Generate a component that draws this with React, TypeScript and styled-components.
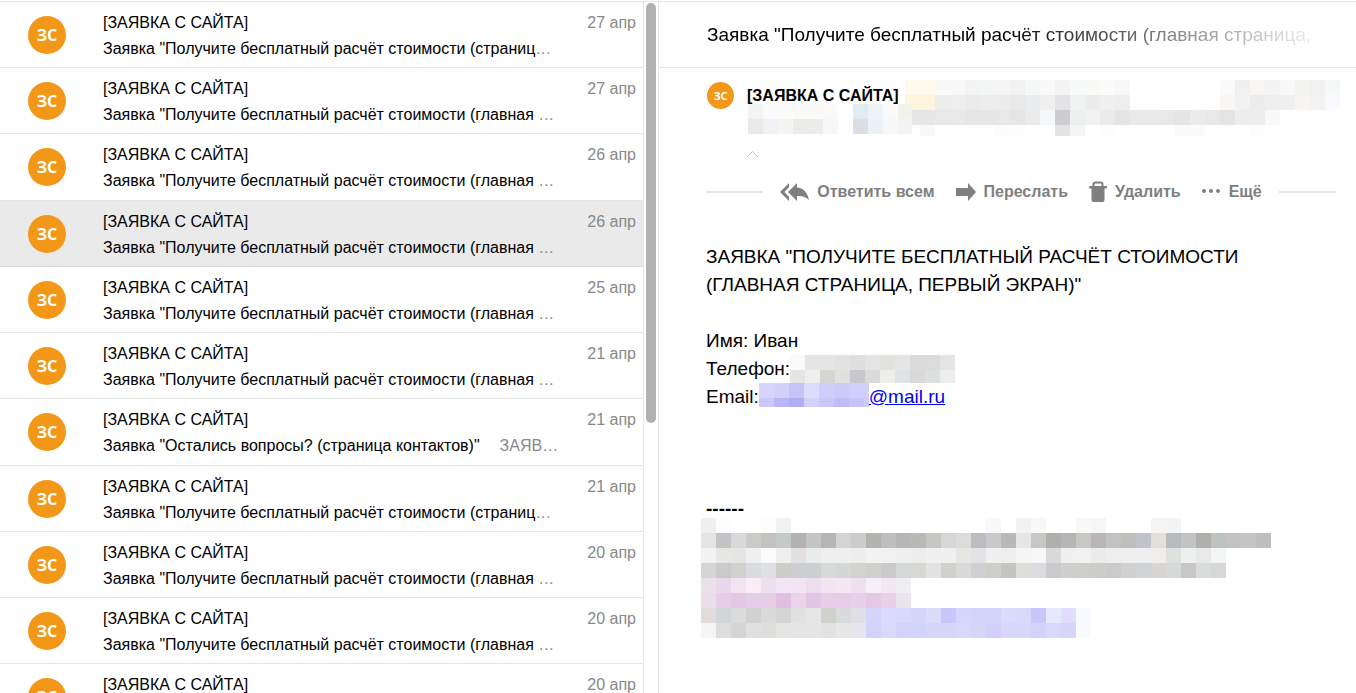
import React from "react";
import styled, { createGlobalStyle } from "styled-components";

const GlobalStyle = createGlobalStyle`
  * { box-sizing: border-box; }
  body {
    margin: 0;
    background: #fff;
    color: #000;
    font-family: "Liberation Sans", Arial, sans-serif;
    font-size: 16px;
  }
  button { font: inherit; color: inherit; background: none; border: 0; padding: 0; cursor: pointer; }
`;

const Shell = styled.div`
  display: grid;
  grid-template-columns: minmax(0, 659fr) minmax(0, 697fr);
  height: 100vh;
  overflow: hidden;
  padding-top: 1px;
  background: #fff;
`;

const ListPane = styled.section`
  display: flex;
  min-height: 0;
  overflow: hidden;
  border-top: 1px solid #e5e5e5;
  border-right: 1px solid #e5e5e5;
`;

const Letters = styled.ul`
  flex: 1;
  min-width: 0;
  margin: 0;
  padding: 0;
  list-style: none;
  border-right: 1px solid #e5e5e5;
`;

const Letter = styled.li<{ $selected?: boolean }>`
  display: flex;
  height: 66px;
  padding: 8px 7px 0 28px;
  border-bottom: 1px solid ${(p) => (p.$selected ? "#d8d8d8" : "#e5e5e5")};
  background: ${(p) => (p.$selected ? "#eaeaea" : "#fff")};
  &:nth-child(4n + 3) { height: 67px; }
`;

const Avatar = styled.span<{ $small?: boolean }>`
  flex: none;
  display: grid;
  place-items: center;
  width: ${(p) => (p.$small ? 27 : 38)}px;
  height: ${(p) => (p.$small ? 27 : 38)}px;
  margin-top: ${(p) => (p.$small ? 0 : 6)}px;
  border-radius: 50%;
  background: #f39719;
  color: #fff;
  font: 700 ${(p) => (p.$small ? 11 : 16)}px "Open Sans", sans-serif;
`;

const Summary = styled.div`
  flex: 1;
  min-width: 0;
  margin-left: 37px;
  line-height: 26px;
`;

const SummaryTop = styled.div`
  display: flex;
  justify-content: space-between;
`;

const DateLabel = styled.time`
  color: #888;
`;

const SubjectLine = styled.div`
  margin-right: 76px;
  overflow: hidden;
  white-space: nowrap;
  text-overflow: ellipsis;
  color: #888;
`;

const Subject = styled.span`
  color: #000;
`;

const Excerpt = styled.span`
  margin-left: 20px;
`;

const ScrollTrack = styled.div`
  flex: none;
  width: 14px;
  padding: 1px 2px;
`;

const ScrollThumb = styled.div`
  height: 61%;
  border-radius: 5px;
  background: #b1b1b1;
`;

const Reader = styled.main`
  min-width: 0;
  border-top: 1px solid #e5e5e5;
`;

const ReaderTitle = styled.h1`
  margin: 0;
  height: 66px;
  padding: 0 20px 0 48px;
  border-bottom: 1px solid #e5e5e5;
  font-size: 19px;
  font-weight: 400;
  line-height: 66px;
`;

const FadingText = styled.span`
  display: block;
  overflow: hidden;
  white-space: nowrap;
  mask-image: linear-gradient(to right, #000 46%, transparent 100%);
`;

const Sender = styled.header`
  position: relative;
  display: flex;
  gap: 13px;
  height: 66px;
  padding: 14px 16px 0 48px;
`;

const SenderName = styled.strong`
  line-height: 28px;
`;

const SenderMosaic = styled.div`
  position: absolute;
  top: 12px;
  left: 89px;
`;

const Collapse = styled.button`
  display: block;
  margin: 12px 0 0 87px;
  height: 12px;
`;

const Toolbar = styled.div`
  display: flex;
  align-items: center;
  height: 48px;
  margin-top: 10px;
  padding: 0 20px 0 47px;
  color: #7f7f7f;
  font-weight: 700;
  &::before, &::after {
    content: "";
    flex: 1;
    height: 2px;
    background: #e5e5e5;
  }
  &::before { margin-right: 17px; }
  &::after { margin-left: 17px; }
`;

const Actions = styled.div`
  display: flex;
  gap: 21px;
`;

const Action = styled.button`
  display: flex;
  align-items: center;
  gap: 8px;
  line-height: 24px;
  white-space: nowrap;
`;

const Body = styled.article`
  padding: 27px 20px 0 47px;
  font-size: 19px;
  line-height: 28px;
  p { margin: 0 0 28px; max-width: 560px; }
`;

const Fields = styled.div`
  margin-bottom: 84px;
`;

const Field = styled.div`
  display: flex;
  height: 28px;
  a { color: #0000ee; }
`;

const Signature = styled.footer`
  font-weight: 700;
  svg { display: block; margin: -5px 0 0 -5px; }
`;

const CELL = 15;

type MosaicProps = { rows: string[]; width: number; height: number };

/* Pixelated cover over private data: each row is a list of cell colours, "-" leaves a gap. */
function Mosaic({ rows, width, height }: MosaicProps) {
  return (
    <svg width={width} height={height} shapeRendering="crispEdges" aria-hidden="true">
      {rows.map((row, y) =>
        row.split(" ").map((c, x) =>
          c === "-" ? null : (
            <rect key={`${x}-${y}`} x={x * CELL} y={y * CELL} width={CELL} height={CELL} fill={`#${c}`} />
          )
        )
      )}
    </svg>
  );
}

const nameRight = [
  "fffaec fffaec f9faf8 f8f8f8 f4f4f5 f4f5f5 f5f5f5 f2f2f3 f6f8f8 f9f9f9 f4f4f4 f7faf8 f9f9f6 fbfbfb f8f8f8 - - - - - - fbfbfb f0f0f0 f7f6f3 f4f4f4 f8f8f8 f3f3f2 f1f1f1 f6f8f7",
  "fff5dc fff5dc ededee f0eeed ebebeb ededed ececec e9e9e9 ebecef efefef e3e3e5 eff2f1 ececec eff1f0 f0eeec - - - - - - f9f6f4 f2f2f2 ececec eeeeee f0f0f0 f6f5f3 f3f3f3 f8fafd",
];
const nameLow = [
  "e6e6e6 e6e6e7 e8e8e7 e9e9e9 e6e6e6 e7e7e7 e8e8e8 e6e6e6 ebebeb f6f7fa cdccd1 ecefee f1f1f1 ebebeb e5e5e5 e9e9e9 e9e9e9 e8e8e8 e5e5e5 ebebeb e8e8e8 e4e4e4 ededed ededed f9f9f9",
  "- f9f9f9 - - - - fcfcfc fdfdfd - - e4e2e3 f5f5f5 - fdfdfd - - - - fafafa fbfbfb - - - fdfdfd -",
];
const nameLeft = [
  "f3f3f4 fafafb fbfbfb f9f9f8 f9f9f9 fbfaf8 - dfeaf2 eef3f9 fafafb f2f2ed",
  "e9e9e7 f0f1f7 f4f4f3 ebebe8 ebecec f7f7f8 - dbdee4 eaf2f7 f7f7f8 f4f4f4",
];
const phone = [
  "fafafa e5e5e5 e5e5e4 e2e2e2 dfdfe1 e4e4e4 e2e2e1 e5e5e8 dadbda dbdddd e4e4e5",
  "e5e5e7 eef0ef d6d5d1 e0e0df c8c8cb dadad9 ededec e1e2e6 d9d9d8 dedfe0 ededed",
];
const mail = [
  "d7d5fb d3d1fa c5c4f9 dddbfe cfcdf9 cccbf8 d1cffa d0cefa",
  "cac8fa b8b6f8 b0aef5 d3d1fa cac8f8 bfbdf7 c5c3f8 cecbf9",
];
const signature = [
  "f0efed fbfdff - - fefdfa f1f3f2 - - - - - - - - - - - - - f9f9f9 - f2f2f2 f8f8f8 - - f8f8f8 f6f6f6 - - - f6f5f3 f2f4f6",
  "e5e4e2 c4c4c7 d9d9d9 cacac7 c2c2c2 c4c9ca b4b2b0 c3c6c5 b7b5b3 d4d4d4 cccccc b4b3b0 bcbec0 b6b6b6 b9b9b6 c6c6c3 d7d7d7 dadddb c0bbc0 c8caca b9b9bc e6e6e6 c5c8c6 b0afab b5b6b8 c8c7c4 bbb5b7 c0c3c2 c1bfbb c0c3c9 e3dfd9 b6bbbe c2c3c6 afafac bdc2c2 c5c2c3 c4c6c4 bfbebe",
  "f2f2f2 e8e7e4 e3e5e7 efefef fcfcfc eeeeee e2e1df e9ebed efefef eeefee ebeeed f2f2f2 f1f1f1 efefef ededed eef1f0 f0f0f0 e7e6e3 e1e3e5 f0f0f0 eeeeee f5f5f3 f7f7f7 d9d9d9 f0f0ee f1f1f1 ebebea eeeeee eef0f0 efefef f0eeec dfe1df eef0f0 e8e8e8 f4f5f5",
  "d4d6d5 cacaca d2d1ce d9dbdc dfe0e2 cfcdca cecfd1 cdcfd0 d7dad7 d5d6d8 d3d2cf cfd1cf cacacc d6d8d7 d7d8d2 e2e2e4 d1d0cd d9d9d9 cfd0d2 cfcecb c4c4c4 deddda dadce0 cacacc cfcfcd cfcec9 cccecc cbcbcb d0d0d0 d2d3d5 d8d4d2 d6d8da c9c7c5 d9dbdd d6d8d6",
  "eae0e9 ebd7eb f2e3f1 f8edf4 ecdfee f1e6f3 f2e4f0 ecdeef f1e5f2 f3e7f1 efe0f0 f5eff7 f5e7f2 efeff1",
  "eadfe8 e7cce6 e5c7e3 e4cde8 e8cde6 e0bfe0 ebd4eb e1c5e4 e8cde8 e6cce7 e8d0e8 e5c8e5 e9d0e8 e9e5ed",
  "e1dddc d1d6d8 dbdbdb d1d1d1 dadada d4d4d4 e0e2e1 e6e6e6 d0d1cd d9dadb e0dfe8 d4d5fa dadbfc d8d8fb d3d5fb dbdbfb c7c7fa d5d6fb d4d4fa d2d2fa dbdbfc d8d8fb c9c7fa e7e7fe e1ddfb f8fbff",
  "f5f5f5 dddddd d5d5d5 e0e0e0 ddddda e4e4e4 e4e5e7 e5e5e6 e2e2e2 e7e7e6 e8e5f1 d1d3fb d9d9fb d3d2fa d1d4fb d6d6fb d6d6fa d8d8fb d5d5fa d2d0fa d7d7fb d7d7fb d3d2fa d8d8fb d8d4fa f9fbff",
];

const IconReplyAll = () => (
  <svg width="29" height="18" viewBox="0 0 29 18" fill="currentColor" aria-hidden="true">
    <path d="M9 0 0 9l9 9v-4L4.500 9 9 4z" />
    <path d="M17 0 8 9l9 9v-5c5-.500 9 1 12 4-1.500-8-6-12-12-12.500z" />
  </svg>
);
const IconForward = () => (
  <svg width="20" height="18" viewBox="0 0 20 18" fill="currentColor" aria-hidden="true">
    <path d="M0 5h12V0l8 9-8 9v-5H0z" />
  </svg>
);
const IconTrash = () => (
  <svg width="18" height="22" viewBox="0 0 18 22" fill="currentColor" aria-hidden="true">
    <path d="M4.500 6V3.500q0-2 2-2h5q2 0 2 2V6" fill="none" stroke="currentColor" strokeWidth="2" />
    <rect y="5" width="18" height="2.500" rx="1" />
    <path d="M2.500 6h13v13q0 2-2 2h-9q-2 0-2-2z" />
  </svg>
);
const IconMore = () => (
  <svg width="19" height="20" viewBox="0 0 19 20" fill="currentColor" aria-hidden="true">
    <circle cx="2" cy="9" r="2" />
    <circle cx="9" cy="9" r="2" />
    <circle cx="16" cy="9" r="2" />
  </svg>
);

const SENDER = "[ЗАЯВКА С САЙТА]";
const MAIN = 'Заявка "Получите бесплатный расчёт стоимости (главная страница, первый экран)"';
const PAGE = 'Заявка "Получите бесплатный расчёт стоимости (страница услуги)"';
const CONTACTS = 'Заявка "Остались вопросы? (страница контактов)"';

const letters = [
  { date: "27 апр", subject: PAGE },
  { date: "27 апр", subject: MAIN },
  { date: "26 апр", subject: MAIN },
  { date: "26 апр", subject: MAIN, selected: true },
  { date: "25 апр", subject: MAIN },
  { date: "21 апр", subject: MAIN },
  { date: "21 апр", subject: CONTACTS, excerpt: "ЗАЯВКА" },
  { date: "21 апр", subject: PAGE },
  { date: "20 апр", subject: MAIN },
  { date: "20 апр", subject: MAIN },
  { date: "20 апр", subject: MAIN },
];

export default function App() {
  return (
    <Shell>
      <GlobalStyle />
      <ListPane>
        <Letters>
          {letters.map((l, i) => (
            <Letter key={i} $selected={l.selected}>
              <Avatar>ЗС</Avatar>
              <Summary>
                <SummaryTop>
                  <span>{SENDER}</span>
                  <DateLabel>{l.date}</DateLabel>
                </SummaryTop>
                <SubjectLine>
                  <Subject>{l.subject}</Subject>
                  {l.excerpt && <Excerpt>{l.excerpt}</Excerpt>}
                </SubjectLine>
              </Summary>
            </Letter>
          ))}
        </Letters>
        <ScrollTrack>
          <ScrollThumb />
        </ScrollTrack>
      </ListPane>
      <Reader>
        <ReaderTitle>
          <FadingText>{'Заявка "Получите бесплатный расчёт стоимости (главная страница,'}</FadingText>
        </ReaderTitle>
        <Sender>
          <Avatar $small>ЗС</Avatar>
          <SenderName>{SENDER}</SenderName>
          <SenderMosaic>
            <svg width="592" height="56" aria-hidden="true">
              <g transform="translate(157 0)"><Mosaic rows={nameRight} width={435} height={30} /></g>
              <g transform="translate(157 30)"><Mosaic rows={nameLow} width={375} height={26} /></g>
              <g transform="translate(0 24)"><Mosaic rows={nameLeft} width={164} height={30} /></g>
            </svg>
          </SenderMosaic>
        </Sender>
        <Collapse aria-label="Свернуть">
          <svg width="13" height="12" viewBox="0 0 13 12" aria-hidden="true">
            <path d="M1 9l5.500-5.500L12 9" fill="none" stroke="#c0c0c0" />
          </svg>
        </Collapse>
        <Toolbar>
          <Actions>
            <Action><IconReplyAll />Ответить всем</Action>
            <Action><IconForward />Переслать</Action>
            <Action><IconTrash />Удалить</Action>
            <Action><IconMore />Ещё</Action>
          </Actions>
        </Toolbar>
        <Body>
          <p>{'ЗАЯВКА "ПОЛУЧИТЕ БЕСПЛАТНЫЙ РАСЧЁТ СТОИМОСТИ (ГЛАВНАЯ СТРАНИЦА, ПЕРВЫЙ ЭКРАН)"'}</p>
          <Fields>
            <Field>Имя: Иван</Field>
            <Field>Телефон:<Mosaic rows={phone} width={165} height={28} /></Field>
            <Field>Email:<Mosaic rows={mail} width={110} height={24} /><a href="mailto:">@mail.ru</a></Field>
          </Fields>
          <Signature>
            ------
            <Mosaic rows={signature} width={570} height={120} />
          </Signature>
        </Body>
      </Reader>
    </Shell>
  );
}
